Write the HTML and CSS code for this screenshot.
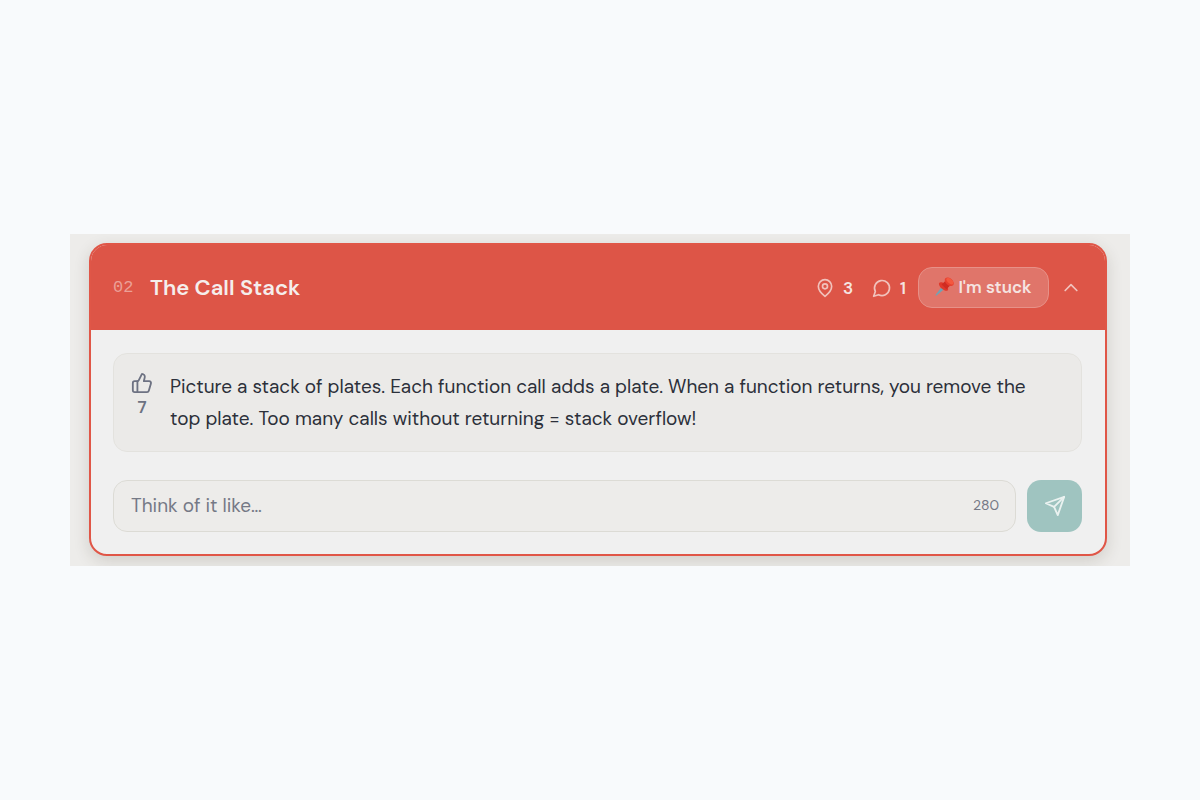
FILE: index.html
```html
<!DOCTYPE html>
<html lang="en">
<head>
    <meta charset="UTF-8">
    <title>The Call Stack</title>
    <link rel="stylesheet" href="styles.css">
</head>
<body>
<main class="panel">
    <section class="card">
        <header class="card-head">
            <span class="number">02</span>
            <h2 class="title">The Call Stack</h2>
            <div class="stat pins">
                <svg class="icon" viewBox="0 0 24 24"><path d="M20 10c0 6-8 12-8 12s-8-6-8-12a8 8 0 0 1 16 0Z"/><circle cx="12" cy="10" r="3"/></svg>
                <span>3</span>
            </div>
            <div class="stat comments">
                <svg class="icon" viewBox="0 0 24 24"><path d="M7.9 20A9 9 0 1 0 4 16.1L2 22Z"/></svg>
                <span>1</span>
            </div>
            <button class="stuck" type="button">
                <svg class="pushpin" viewBox="0 0 20 20">
                    <path d="M7 10.500 .5 19l.8.8L9.500 13Z" fill="#6fa3b5"/>
                    <ellipse cx="9" cy="10" rx="6" ry="3" transform="rotate(42 9 10)" fill="#e0392b"/>
                    <path d="m11 4 5 5-4 4-5-5Z" fill="#cf2c22"/>
                    <ellipse cx="15" cy="5" rx="5.500" ry="3.600" transform="rotate(42 15 5)" fill="#e8402f"/>
                    <ellipse cx="15.700" cy="4.300" rx="4.400" ry="2.400" transform="rotate(42 15.700 4.300)" fill="#f4583f"/>
                </svg>
                <span>I'm stuck</span>
            </button>
            <button class="toggle" type="button" aria-label="Collapse">
                <svg class="icon" viewBox="0 0 24 24"><path d="m19 15-7-7-7 7"/></svg>
            </button>
        </header>
        <div class="card-body">
            <article class="answer">
                <button class="vote" type="button" aria-label="Upvote, 7 votes">
                    <svg class="icon" viewBox="0 0 24 24"><path d="M7 10v12"/><path d="M15 5.880 14 10h5.830a2 2 0 0 1 1.920 2.560l-2.330 8A2 2 0 0 1 17.500 22H4a2 2 0 0 1-2-2v-8a2 2 0 0 1 2-2h2.760a2 2 0 0 0 1.790-1.110L12 2a3.130 3.130 0 0 1 3 3.880Z"/></svg>
                    <span>7</span>
                </button>
                <p class="text">Picture a stack of plates. Each function call adds a plate. When a function returns, you remove the top plate. Too many calls without returning = stack overflow!</p>
            </article>
            <form class="reply">
                <div class="field">
                    <input class="entry" type="text" maxlength="280" placeholder="Think of it like…" aria-label="Your analogy">
                    <span class="left">280</span>
                </div>
                <button class="send" type="button" aria-label="Send">
                    <svg class="icon" viewBox="0 0 24 24"><path d="m22 2-7 20-4-9-9-4Z"/><path d="M22 2 11 13"/></svg>
                </button>
            </form>
        </div>
    </section>
</main>
</body>
</html>
```
FILE: styles.css
```css
* {
    box-sizing: border-box;
}

body {
    margin: 0;
    min-height: 100vh;
    padding: 0 70px;
    display: flex;
    align-items: center;
    background: #f8fafc;
    font-family: "DM Sans", "Open Sans", "Noto Sans", sans-serif;
    color: #2c303a;
}

button {
    border: 0;
    padding: 0;
    background: none;
    font: inherit;
    color: inherit;
    cursor: pointer;
}

.icon {
    display: block;
    width: 20px;
    height: 20px;
    fill: none;
    stroke: currentColor;
    stroke-width: 2;
    stroke-linecap: round;
    stroke-linejoin: round;
}

.panel {
    flex: 1;
    padding: 9px 23px 10px 19px;
    background: #edecea;
    overflow: hidden;
}

.card {
    border: 2px solid #e05647;
    border-radius: 18px;
    background: #f0f0f0;
    box-shadow: 0 5px 16px rgba(60, 50, 30, 0.16);
    overflow: hidden;
}

.card-head {
    display: flex;
    align-items: center;
    height: 85px;
    padding: 0 24px 0 22px;
    background: #dd5547;
    color: #f5e4e1;
}

.number {
    width: 37px;
    font-family: "Liberation Mono", monospace;
    font-size: 17px;
    color: #eba097;
}

.title {
    flex: 1;
    margin: 0;
    font-size: 22px;
    font-weight: 600;
    color: #f5eeec;
}

.stat {
    display: flex;
    align-items: center;
    gap: 8px;
    font-size: 17px;
    font-weight: 600;
}

.stat .icon {
    color: #f1c2bc;
}

.pins {
    margin-right: 19px;
}

.comments {
    margin-right: 12px;
}

.stuck {
    display: flex;
    align-items: center;
    justify-content: center;
    gap: 4px;
    width: 131px;
    height: 41px;
    padding-bottom: 2px;
    border: 1px solid #e79188;
    border-radius: 14px;
    background: #e0756a;
    font-size: 17px;
    font-weight: 600;
}

.pushpin {
    width: 19px;
    height: 19px;
}

.toggle {
    margin-left: 12px;
    color: #f1c2bc;
}

.card-body {
    padding: 23px 23px 22px 22px;
}

.answer {
    display: flex;
    gap: 17px;
    padding: 17px 24px 16px 17px;
    border: 1px solid #e3e2de;
    border-radius: 14px;
    background: #ebeae8;
}

.vote {
    display: flex;
    flex-direction: column;
    align-items: center;
    align-self: flex-start;
    font-size: 17px;
    line-height: 24px;
    font-weight: 600;
    color: #6d7282;
}

.vote .icon {
    width: 22px;
    height: 24px;
}

.text {
    margin: 0;
    font-size: 19px;
    line-height: 32px;
}

.reply {
    display: flex;
    gap: 11px;
    margin-top: 28px;
}

.field {
    flex: 1;
    display: flex;
    align-items: center;
    height: 52px;
    padding: 0 16px 2px 17px;
    border: 1px solid #dcdbd5;
    border-radius: 14px;
    background: #edecea;
}

.entry {
    flex: 1;
    min-width: 0;
    padding: 0;
    border: 0;
    outline: 0;
    background: none;
    font: inherit;
    font-size: 19px;
    color: inherit;
}

.entry::placeholder {
    color: #757986;
}

.left {
    font-size: 14px;
    color: #757986;
}

.send {
    display: flex;
    align-items: center;
    justify-content: center;
    width: 55px;
    height: 52px;
    border-radius: 14px;
    background: #9fc4c0;
    color: #eaf2f0;
}

.send .icon {
    width: 22px;
    height: 22px;
}
```
